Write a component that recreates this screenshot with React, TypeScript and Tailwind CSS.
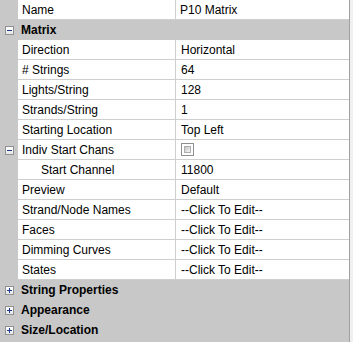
import React from 'react'

interface Row {
    name: string
    value?: string
    indent?: boolean
    toggle?: boolean
    checkbox?: boolean
}

const rows: Row[] = [
    { name: 'Direction', value: 'Horizontal' },
    { name: '# Strings', value: '64' },
    { name: 'Lights/String', value: '128' },
    { name: 'Strands/String', value: '1' },
    { name: 'Starting Location', value: 'Top Left' },
    { name: 'Indiv Start Chans', toggle: true, checkbox: true },
    { name: 'Start Channel', value: '11800', indent: true },
    { name: 'Preview', value: 'Default' },
    { name: 'Strand/Node Names', value: '--Click To Edit--' },
    { name: 'Faces', value: '--Click To Edit--' },
    { name: 'Dimming Curves', value: '--Click To Edit--' },
    { name: 'States', value: '--Click To Edit--' },
]

const Toggle = ({ open }: { open: boolean }) => (
    <div className="w-[9px] h-[9px] border border-[#919191] bg-gradient-to-b from-white to-[#e6e6e6] relative">
        <div className="absolute left-[1px] top-[3px] w-[5px] h-[1px] bg-[#1c3a8a]" />
        {!open && <div className="absolute left-[3px] top-[1px] w-[1px] h-[5px] bg-[#1c3a8a]" />}
    </div>
)

const PropRow = ({ row }: { row: Row }) => (
    <div className="flex h-[20px]">
        <div className="w-[18px] flex items-center justify-center pl-[1px]">
            {row.toggle && <Toggle open />}
        </div>
        <div className={`w-[158px] bg-white border-b border-r border-[#cfcfcf] flex items-center ${row.indent ? 'pl-[23px]' : 'pl-[4px]'}`}>
            {row.name}
        </div>
        <div className="flex-1 bg-white border-b border-[#cfcfcf] flex items-center pl-[5px]">
            {row.checkbox ? (
                <div className="w-[13px] h-[13px] shrink-0 border border-[#8e8f8f] bg-white p-[2px]">
                    <div className="w-[7px] h-[7px] bg-gradient-to-br from-[#c4c4c4] to-[#f8f8f8] border border-[#aeaeae]" />
                </div>
            ) : row.value}
        </div>
    </div>
)

const Group = ({ title, open }: { title: string, open?: boolean }) => (
    <div className="flex h-[20px] items-center">
        <div className="w-[18px] flex items-center justify-center pl-[1px]">
            <Toggle open={!!open} />
        </div>
        <div className="pl-[3px] font-bold text-black">{title}</div>
    </div>
)

export default function App() {
    return (
        <div className="w-[353px] h-[342px] flex overflow-hidden text-[12px] text-black" style={{ fontFamily: '"Liberation Sans", Arial, sans-serif' }}>
            <div className="w-[349px] h-full bg-[#c8c8c8] flex flex-col">
                <div className="flex h-[20px]">
                    <div className="w-[18px]" />
                    <div className="w-[158px] bg-white border-b border-r border-[#cfcfcf] flex items-center pl-[4px]">Name</div>
                    <div className="flex-1 bg-white border-b border-[#cfcfcf] flex items-center pl-[4px]">P10 Matrix</div>
                </div>
                <Group title="Matrix" open />
                {rows.map((row, index) => (
                    <PropRow key={index} row={row} />
                ))}
                <Group title="String Properties" />
                <Group title="Appearance" />
                <Group title="Size/Location" />
            </div>
            <div className="w-[4px] h-full border-l border-[#a0a0a0] bg-[#f0f0f0]" />
        </div>
    )
}
